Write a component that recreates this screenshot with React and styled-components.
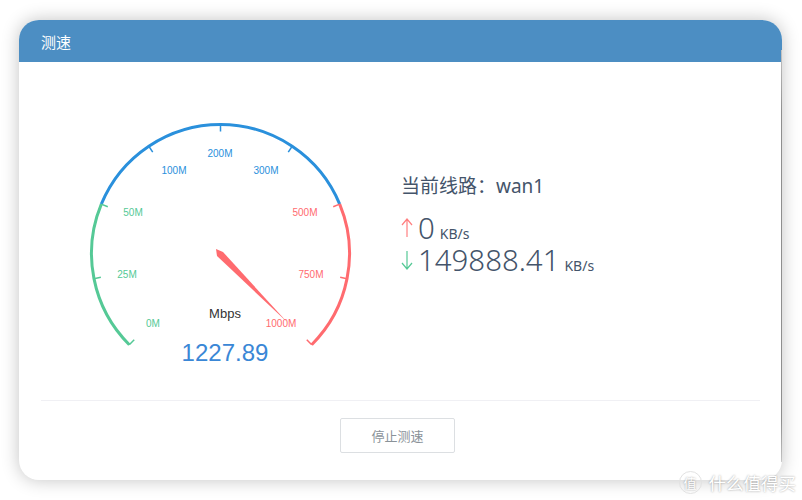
import React from 'react';
import styled, { createGlobalStyle } from 'styled-components';

const CX = 161.5;
const CY = 153.5;
const R = 129;

const GlobalStyle = createGlobalStyle`
  html, body {
    margin: 0;
    padding: 0;
    background: #fff;
    font-family: "Noto Sans", "Noto Sans CJK SC", sans-serif;
  }
`;

const Page = styled.div`
  position: relative;
  width: 802px;
  height: 500px;
  padding: 20px 20px 20px 19px;
  box-sizing: border-box;
  overflow: hidden;
`;

const Dialog = styled.div`
  position: relative;
  height: 100%;
  display: flex;
  flex-direction: column;
  border-radius: 20px;
  overflow: hidden;
  background: #fff;
  box-shadow: 0 0 18px rgba(0, 0, 0, 0.24);

  &::after {
    content: "";
    position: absolute;
    top: 30px;
    right: 0;
    bottom: 18px;
    width: 1px;
    background: linear-gradient(#c4c4c4, #8f8f8f 15%, #8f8f8f 90%, #c4c4c4);
  }
`;

const Header = styled.div`
  height: 42px;
  flex: none;
  display: flex;
  align-items: center;
  padding-left: 22px;
  background: #4c8ec3;
  color: #fff;
  font-size: 15px;
  font-family: "Noto Sans CJK SC", sans-serif;
`;

const Body = styled.div`
  flex: 1;
  display: flex;
  flex-direction: column;
  padding: 0 22px;
`;

const Main = styled.div`
  height: 339px;
  flex: none;
  display: flex;
  padding: 38px 0 0 18px;
  box-sizing: border-box;
  border-bottom: 1px solid #f0f0f4;
`;

const GaugeSvg = styled.svg`
  width: 320px;
  height: 290px;
  flex: none;
`;

const Info = styled.div`
  margin: 73px 0 0 22px;
  color: #44546a;
`;

const Line = styled.div`
  font-size: 19px;
  line-height: 26px;
  margin-bottom: 13px;
  font-family: "Noto Sans", "Noto Sans CJK SC", sans-serif;
`;

const Rate = styled.div`
  display: flex;
  align-items: baseline;
  height: 32px;
`;

const Arrow = styled.svg`
  width: 12px;
  height: 20px;
  margin-right: 5px;
  align-self: center;
  flex: none;
`;

const Value = styled.span`
  font-size: 29.4px;
  font-weight: 300;
  line-height: 32px;
`;

const Unit = styled.span`
  font-size: 14px;
  margin-left: 5px;
`;

const Footer = styled.div`
  display: flex;
  justify-content: center;
  padding: 17px 6px 0 0;
`;

const StopButton = styled.button`
  width: 115px;
  height: 35px;
  background: #fff;
  border: 1px solid #dcdfe2;
  border-radius: 2px;
  color: #8a9299;
  font-size: 13px;
  font-family: "Noto Sans CJK SC", sans-serif;
  padding: 0;
`;

const Watermark = styled.div`
  position: absolute;
  right: 6px;
  bottom: 6px;
  display: flex;
  align-items: center;
  gap: 7px;
  color: #fff;
  font-size: 17.5px;
  line-height: 22px;
  font-family: "Noto Sans CJK SC", sans-serif;
  text-shadow: 0 0 2px rgba(0, 0, 0, 0.4);
`;

const Badge = styled.span`
  width: 21px;
  height: 21px;
  border-radius: 50%;
  display: flex;
  align-items: center;
  justify-content: center;
  border: 1px solid #e2e2e2;
  font-size: 13px;
`;

const polar = (deg, r) => {
  const a = (deg * Math.PI) / 180;
  return [CX + r * Math.cos(a), CY - r * Math.sin(a)];
};

const arc = (from, to) => {
  const [x1, y1] = polar(from, R);
  const [x2, y2] = polar(to, R);
  return `M${x1} ${y1}A${R} ${R} 0 0 1 ${x2} ${y2}`;
};

const GREEN = '#55c996';
const BLUE = '#2a90dc';
const RED = '#ff6b6f';

const segments = [
  [225, 157.5, GREEN],
  [157.5, 22.5, BLUE],
  [22.5, -45, RED],
];

const ticks = [
  [225, GREEN],
  [191.25, GREEN],
  [157.5, GREEN],
  [123.75, BLUE],
  [90, BLUE],
  [56.25, BLUE],
  [22.5, RED],
  [-11.25, RED],
  [-45, RED],
];

const labels = [
  ['0M', 94, 227, GREEN],
  ['25M', 68, 178, GREEN],
  ['50M', 74, 116, GREEN],
  ['100M', 115, 74, BLUE],
  ['200M', 161, 57, BLUE],
  ['300M', 207, 74, BLUE],
  ['500M', 246, 116, RED],
  ['750M', 252, 178, RED],
  ['1000M', 222, 227, RED],
];

const Gauge = () => (
  <GaugeSvg viewBox="0 0 320 290">
    {segments.map(([from, to, color]) => (
      <path key={from} d={arc(from, to)} fill="none" stroke={color} strokeWidth="3" />
    ))}
    {ticks.map(([deg, color]) => {
      const [x1, y1] = polar(deg, R);
      const [x2, y2] = polar(deg, R - 7);
      return <line key={deg} x1={x1} y1={y1} x2={x2} y2={y2} stroke={color} strokeWidth="1.5" />;
    })}
    {labels.map(([text, x, y, color]) => (
      <text key={text} x={x} y={y} fill={color} fontSize="10" textAnchor="middle" fontFamily="'Liberation Sans', sans-serif">
        {text}
      </text>
    ))}
    <path d="M157 149 L164 152 L228 222 L158 156 Z" fill={RED} />
    <text x="166" y="218" fill="#333" fontSize="13" textAnchor="middle" fontFamily="'Liberation Sans', sans-serif">
      Mbps
    </text>
    <text x="166" y="261" fill="#3a87d6" fontSize="24" textAnchor="middle" fontFamily="'Liberation Sans', sans-serif">
      1227.89
    </text>
  </GaugeSvg>
);

const UpArrow = () => (
  <Arrow viewBox="0 0 12 20">
    <path d="M6 19V1M1 7l5-6 5 6" fill="none" stroke="#ff7f80" strokeWidth="1.2" />
  </Arrow>
);

const DownArrow = () => (
  <Arrow viewBox="0 0 12 20">
    <path d="M6 1v18M1 13l5 6 5-6" fill="none" stroke="#55c996" strokeWidth="1.2" />
  </Arrow>
);

export default function App() {
  return (
    <Page>
      <GlobalStyle />
      <Dialog>
        <Header>测速</Header>
        <Body>
          <Main>
            <Gauge />
            <Info>
              <Line>当前线路：wan1</Line>
              <Rate>
                <UpArrow />
                <Value>0</Value>
                <Unit>KB/s</Unit>
              </Rate>
              <Rate>
                <DownArrow />
                <Value>149888.41</Value>
                <Unit>KB/s</Unit>
              </Rate>
            </Info>
          </Main>
          <Footer>
            <StopButton>停止测速</StopButton>
          </Footer>
        </Body>
      </Dialog>
      <Watermark>
        <Badge>值</Badge>
        什么值得买
      </Watermark>
    </Page>
  );
}
